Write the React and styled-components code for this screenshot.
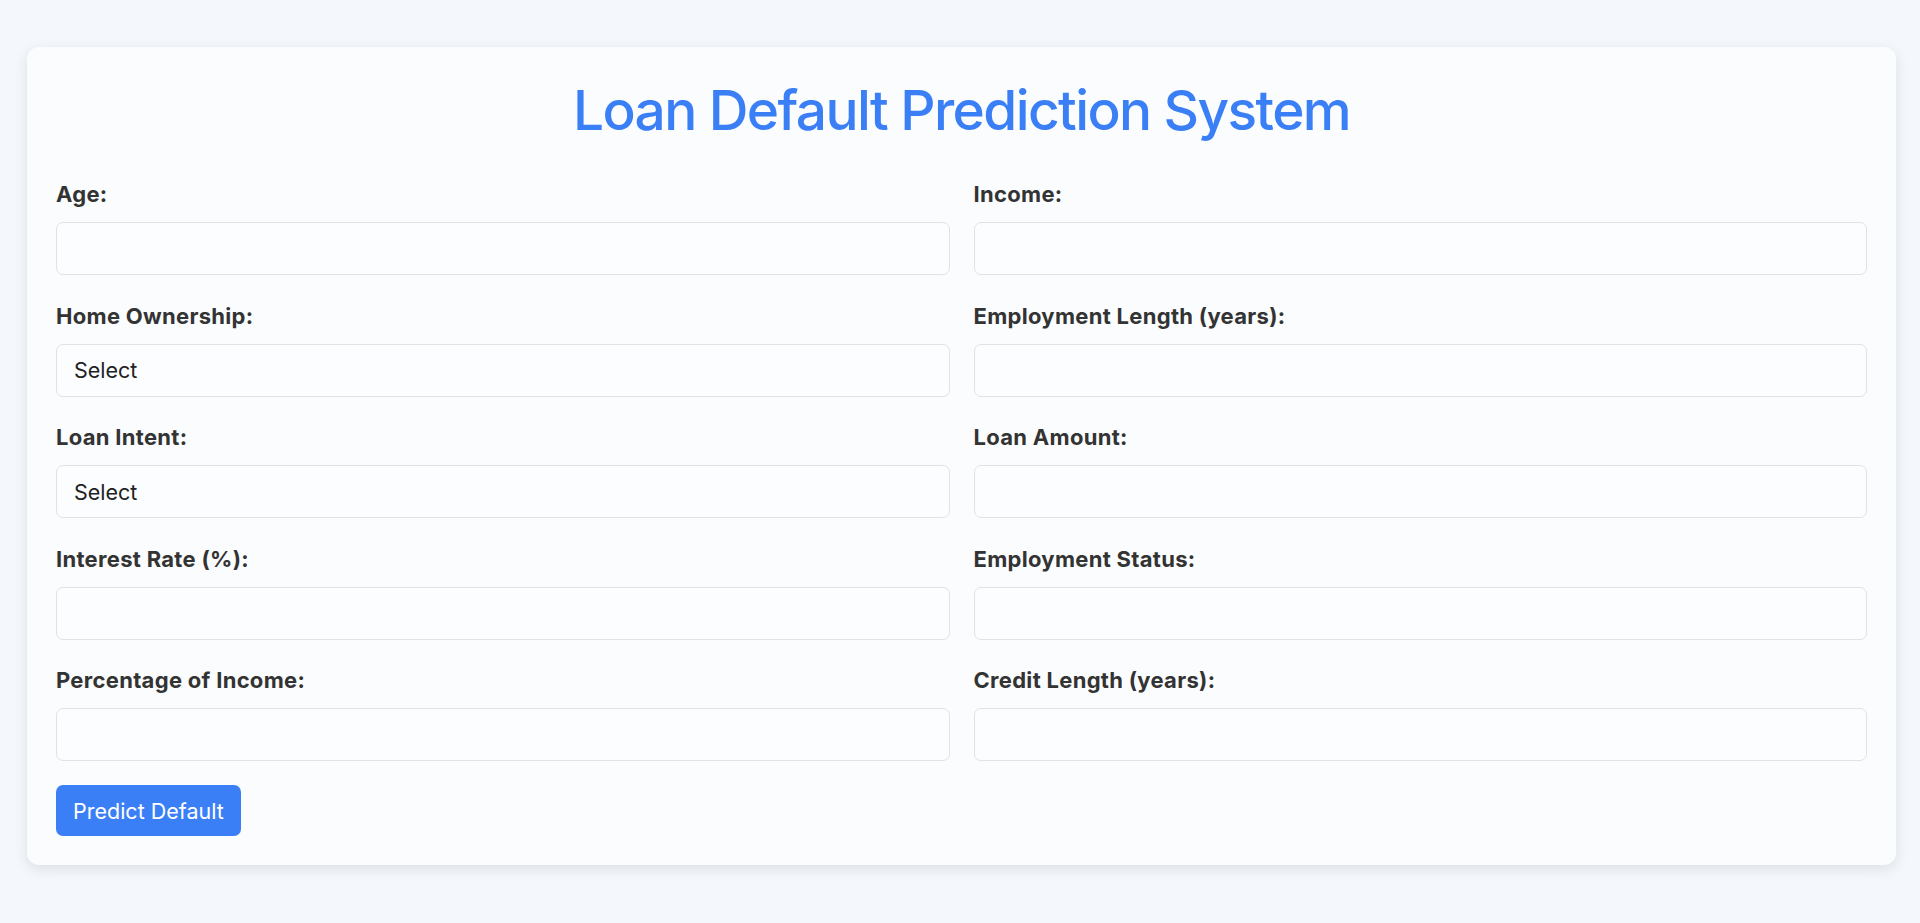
import React from "react";
import styled, { createGlobalStyle } from "styled-components";

const Global = createGlobalStyle`
  html, body { margin: 0; padding: 0; }
  body {
    background: #f4f7fb;
    font-family: Inter, "Noto Sans", "Liberation Sans", sans-serif;
    color: #333;
  }
  * { box-sizing: border-box; }
`;

const Page = styled.div`
  padding: 47px 24px 58px 27px;
`;

const Card = styled.div`
  background: #fbfcfe;
  border-radius: 12px;
  padding: 29px;
  box-shadow: 0 4px 14px rgba(15, 23, 42, 0.1);
`;

const Title = styled.h1`
  margin: 0 0 36px;
  font-size: 55px;
  font-weight: 500;
  line-height: 69px;
  text-align: center;
  color: #3b7ff6;
  letter-spacing: -1.6px;
`;

const Grid = styled.div`
  display: grid;
  grid-template-columns: 1fr 1fr;
  column-gap: 24px;
  row-gap: 27.5px;
`;

const Field = styled.div`
  display: flex;
  flex-direction: column;
`;

const Label = styled.label`
  font-size: 22px;
  font-weight: 700;
  line-height: 26px;
  letter-spacing: 0.3px;
  color: #333;
  margin-bottom: 15px;
`;

const Input = styled.input`
  height: 53px;
  width: 100%;
  border: 1.5px solid #dfe2e7;
  border-radius: 7px;
  background: #fcfdff;
  padding: 0 18px;
  font-family: inherit;
  font-size: 21.5px;
  color: #222;
  outline: none;
`;

const Select = styled.select`
  height: 53px;
  width: 100%;
  border: 1.5px solid #dfe2e7;
  border-radius: 7px;
  background: #fcfdff;
  padding: 0 17px;
  font-family: inherit;
  font-size: 21.5px;
  color: #222;
  appearance: none;
  -webkit-appearance: none;
  outline: none;
`;

const Button = styled.button`
  margin-top: 24px;
  height: 51px;
  padding: 0 17px;
  background: #3b7ff6;
  color: #fff;
  border: none;
  border-radius: 7px;
  font-family: inherit;
  font-size: 21.5px;
  font-weight: 400;
  cursor: pointer;
`;

const fields = [
  { label: "Age:", type: "input" },
  { label: "Income:", type: "input" },
  { label: "Home Ownership:", type: "select" },
  { label: "Employment Length (years):", type: "input" },
  { label: "Loan Intent:", type: "select" },
  { label: "Loan Amount:", type: "input" },
  { label: "Interest Rate (%):", type: "input" },
  { label: "Employment Status:", type: "input" },
  { label: "Percentage of Income:", type: "input" },
  { label: "Credit Length (years):", type: "input" },
];

export default function App() {
  return (
    <>
      <Global />
      <Page>
        <Card>
          <Title>Loan Default Prediction System</Title>
          <Grid>
            {fields.map((f) => (
              <Field key={f.label}>
                <Label>{f.label}</Label>
                {f.type === "select" ? (
                  <Select defaultValue="">
                    <option value="">Select</option>
                  </Select>
                ) : (
                  <Input type="text" />
                )}
              </Field>
            ))}
          </Grid>
          <Button>Predict Default</Button>
        </Card>
      </Page>
    </>
  );
}
